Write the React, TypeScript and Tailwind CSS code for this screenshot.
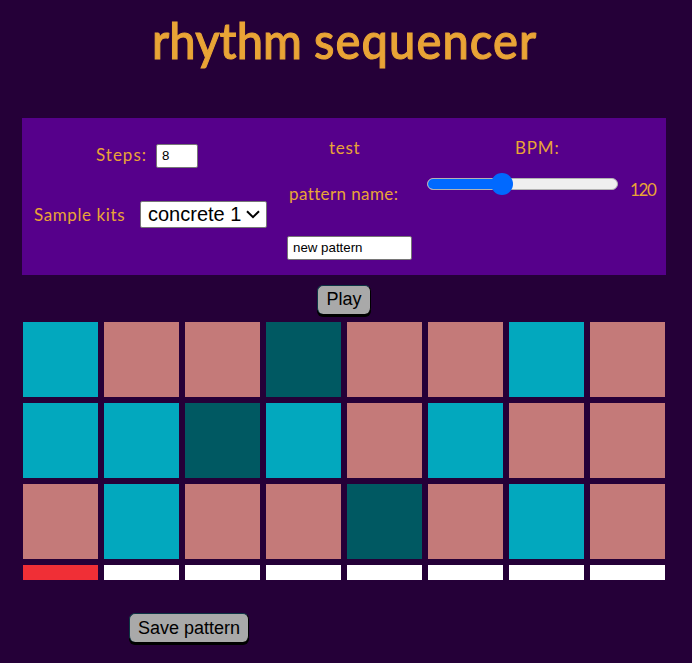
import type { ReactNode } from "react";

// 1 = active step, 0 = empty step, 2 = accented step
const tracks = [
  [1, 0, 0, 2, 0, 0, 1, 0],
  [1, 1, 2, 1, 0, 1, 0, 0],
  [0, 1, 0, 0, 2, 0, 1, 0],
];

const cellColors = ["bg-[#c47a79]", "bg-[#02a8be]", "bg-[#005962]"];

function Label({ className, children }: { className: string; children: ReactNode }) {
  return (
    <span className={`block h-6 text-[17px] leading-6 whitespace-nowrap text-[#e9a436] ${className}`}>
      {children}
    </span>
  );
}

function Button({ className, children }: { className: string; children: ReactNode }) {
  return (
    <button
      className={`block rounded-[6px] border border-b-0 border-[#0c3444] border-r-black bg-[#a9a9a9] text-center font-['Liberation_Sans',sans-serif] whitespace-nowrap text-black shadow-[0_3px_0_#000] ${className}`}
    >
      {children}
    </button>
  );
}

export default function App() {
  return (
    <main className="h-[663px] w-[692px] overflow-hidden bg-[#250038] font-['Lato',sans-serif]">
      <h1 className="h-[118px] pt-[6px] pl-[152px] text-[47px] leading-[70px] font-medium whitespace-nowrap text-[#e9a436] [-webkit-text-stroke:1px_#e9a436]">
        <span className="inline-block origin-[0_52px] scale-y-[1.06]">
          <span className="tracking-[0.1px]">rhythm </span>
          <span className="tracking-[1.1px]">sequencer</span>
        </span>
      </h1>

      <section className="ml-[22px] flex h-[157px] w-[644px] bg-[#56008b]">
        <div className="w-[265px]">
          <div className="flex pt-[26px] pl-[74px]">
            <Label className="mt-[-1px] w-[60px] tracking-[1px]">Steps:</Label>
            <input
              className="h-6 w-[42px] rounded-[2px] border border-[#767676] bg-white px-[5px] pb-[2px] font-['Liberation_Sans',sans-serif] text-[13.3px] text-black"
              defaultValue="8"
            />
          </div>
          <div className="mt-[33px] flex pl-3">
            <Label className="mt-[2px] w-[106px] tracking-[0.6px]">Sample kits</Label>
            <div className="flex h-[27px] w-[127px] items-center rounded-[2px] border border-[#767676] bg-white pl-[7px] font-['Liberation_Sans',sans-serif] text-[20px] leading-[25px] whitespace-nowrap text-black">
              <span className="w-[98px]">concrete 1</span>
              <svg width="14" height="9" viewBox="0 0 14 9" fill="none" stroke="black" strokeWidth="2">
                <path d="M1 1.2 7 7.2 13 1.2" />
              </svg>
            </div>
          </div>
        </div>

        <div className="w-[140px] pt-[18px]">
          <Label className="pl-[42px] tracking-[0.7px]">test</Label>
          <Label className="mt-[22px] pl-[2px] tracking-[0.4px]">pattern name:</Label>
          <input
            className="mt-[30px] block h-6 w-[125px] rounded-[2px] border border-[#767676] bg-white px-[5px] pb-[2px] font-['Liberation_Sans',sans-serif] text-[13.3px] text-black"
            defaultValue="new pattern"
          />
        </div>

        <div className="pt-[18px]">
          <Label className="pl-[88px] tracking-[0.8px]">BPM:</Label>
          <div className="flex pt-[13px]">
            <div className="relative h-[22px] w-[203px]">
              <div className="mt-[5px] h-3 w-[191px] overflow-hidden rounded-full border border-[#b2b2b2] bg-[#efefef]">
                <div className="h-full w-[75px] bg-[#0069ff]" />
              </div>
              <div className="absolute top-0 left-[64px] size-[22px] rounded-full bg-[#0069ff]" />
            </div>
            <Label className="mt-[5px] tracking-[-1.3px]">120</Label>
          </div>
        </div>
      </section>

      <div className="flex h-[47px] pt-[10px] pl-[317px]">
        <Button className="h-[29px] w-[54px] pb-[2px] text-[18px] leading-[26px]">Play</Button>
      </div>

      <section className="ml-[23px] grid w-[642px] gap-[6px]">
        {tracks.map((track, row) => (
          <div key={row} className="grid grid-cols-8 gap-[6px]">
            {track.map((state, step) => (
              <div key={step} className={`h-[75px] ${cellColors[state]}`} />
            ))}
          </div>
        ))}
        <div className="grid grid-cols-8 gap-[6px]">
          {tracks[0].map((_, step) => (
            <div key={step} className={`h-[15px] ${step === 0 ? "bg-[#f02f36]" : "bg-white"}`} />
          ))}
        </div>
      </section>

      <div className="pt-[33px] pl-[129px]">
        <Button className="h-[29px] w-[120px] text-[18px] leading-[26px]">Save pattern</Button>
      </div>
    </main>
  );
}
